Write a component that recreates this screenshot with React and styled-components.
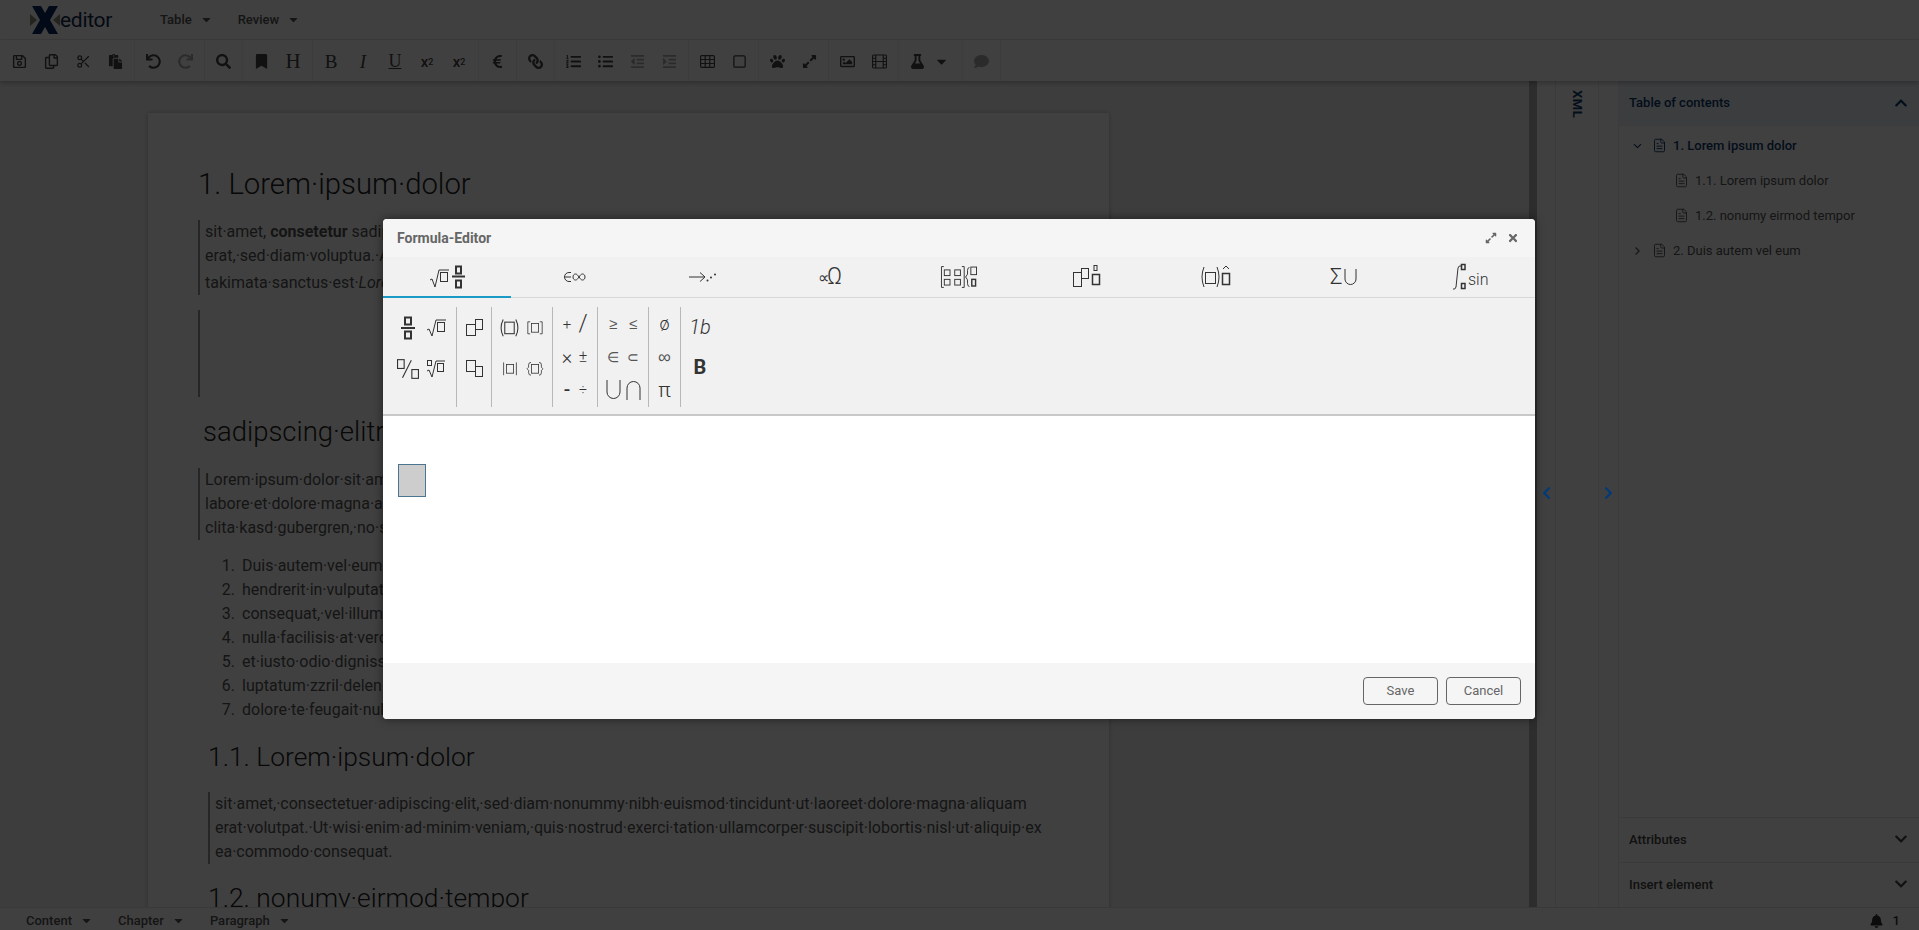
import React from "react";
import styled, { createGlobalStyle } from "styled-components";
import {
  FaRegSave, FaRegCopy, FaPaste, FaUndo, FaRedo, FaSearch, FaBookmark,
  FaEuroSign, FaLink, FaListOl, FaListUl, FaOutdent, FaIndent,
  FaPaw, FaExpandAlt, FaRegImage, FaFlask, FaComment, FaCaretDown,
  FaChevronUp, FaChevronDown, FaChevronLeft, FaChevronRight, FaBell, FaTimes,
} from "react-icons/fa";
import { LuChevronDown, LuChevronRight, LuFileText, LuScissors, LuSquare } from "react-icons/lu";

// global
// ------

const GlobalStyle = createGlobalStyle`
  html, body { margin: 0; padding: 0; height: 100%; overflow: hidden; }
  body { font-family: Roboto, "Liberation Sans", sans-serif; color: #222; }
  * { box-sizing: border-box; }
`;

// page shell
// ----------

const Page = styled.div`
  position: relative;
  width: 1919px;
  height: 930px;
  display: flex;
  flex-direction: column;
  overflow: hidden;
  background: #fff;
`;

const Overlay = styled.div`
  position: absolute;
  inset: 0;
  z-index: 10;
  background: rgba(0, 0, 0, 0.75);
  display: flex;
  justify-content: center;
  align-items: flex-start;
  padding: 219px 1px 0 0;
`;

// header
// ------

const Header = styled.header`
  height: 40px;
  flex: none;
  display: flex;
  align-items: center;
  padding-left: 30px;
  background: #fff;
  border-bottom: 1px solid #eee;
`;

const Logo = styled.div`
  width: 130px;
  display: flex;
  align-items: center;
  font-size: 21px;
  letter-spacing: -0.3px;
  color: #0c2b52;
`;

const LogoMark = styled.svg`
  width: 30px;
  height: 28px;
  flex: none;
`;

const MenuItem = styled.div`
  display: flex;
  align-items: center;
  gap: 8px;
  margin-right: 25px;
  font-size: 13px;
  font-weight: 500;
  color: #555;
  svg { width: 13px; height: 13px; color: #555; }
`;

// toolbar
// -------

const Toolbar = styled.div`
  height: 41px;
  flex: none;
  display: flex;
  padding-left: 3px;
  background: #fff;
  box-shadow: 0 2px 5px rgba(0, 0, 0, 0.25);
  position: relative;
  z-index: 2;
`;

const ToolGroup = styled.div`
  display: flex;
  align-items: center;
  padding-right: 3px;
  margin-right: 2px;
  border-right: 1px solid #eee;
`;

const ToolButton = styled.div`
  width: ${(p) => p.$w || 32}px;
  height: 100%;
  display: flex;
  align-items: center;
  justify-content: center;
  padding: 2px ${(p) => p.$padRight || 0}px 0 0;
  color: ${(p) => (p.$off ? "#aaa" : "#444")};
  font-family: ${(p) => (p.$serif ? '"Liberation Serif", serif' : "Roboto, sans-serif")};
  font-style: ${(p) => (p.$italic ? "italic" : "normal")};
  font-weight: ${(p) => (p.$serif ? 400 : 500)};
  text-decoration: ${(p) => (p.$underline ? "underline" : "none")};
  font-size: ${(p) => p.$size || 14}px;
  svg {
    width: 15px;
    height: 15px;
    transform: ${(p) => (p.$flip ? "scaleX(-1)" : "none")};
  }
  sub, sup { font-size: 9px; }
`;

const ToolSvg = styled.svg`
  fill: none;
  stroke: currentColor;
  stroke-width: 1.2;
`;

// main area
// ---------

const Main = styled.main`
  flex: 1;
  min-height: 0;
  display: flex;
`;

const DocArea = styled.div`
  width: 1529px;
  flex: none;
  overflow: hidden;
  padding-left: 148px;
  background: #f3f3f3;
`;

const Paper = styled.article`
  width: 961px;
  min-height: 900px;
  margin-top: 32px;
  padding: 1px 40px 0 50px;
  background: #fff;
  box-shadow: 0 0 4px rgba(0, 0, 0, 0.25);
`;

const Title = styled.h1`
  margin: ${(p) => p.$top}px 0 0 ${(p) => p.$indent || 0}px;
  font-size: ${(p) => p.$size || 29.3}px;
  line-height: 36px;
  font-weight: 300;
  white-space: nowrap;
  color: #222;
`;

const Block = styled.div`
  margin: ${(p) => p.$top}px 0 0 ${(p) => p.$indent || 0}px;
  min-height: ${(p) => p.$height || 0}px;
  padding-left: 5px;
  border-left: 2px solid #999;
  font-size: 16px;
  font-weight: 400;
  line-height: 24px;
  white-space: nowrap;
  overflow: hidden;
  color: #555;
`;

const Line = styled.span`
  display: block;
  margin-top: ${(p) => p.$gap || 0}px;
`;

const OrderedList = styled.ol`
  margin: 14px 0 0 0;
  padding-left: 41px;
  font-size: 16px;
  font-weight: 400;
  line-height: 24px;
  white-space: nowrap;
  color: #555;
  li { padding-left: 3px; }
`;

const ScrollTrack = styled.div`
  width: 8px;
  flex: none;
  background: #b4b4b4;
`;

const Rail = styled.div`
  width: ${(p) => p.$w}px;
  flex: none;
  display: flex;
  justify-content: center;
  padding-top: 405px;
  background: #fff;
  border-right: 1px solid #ececec;
`;

const RailArrow = styled.div`
  position: relative;
  z-index: 11;
  height: 14px;
  color: #003a7a;
  svg { display: block; width: 13px; height: 14px; }
`;

const XmlRail = styled.div`
  width: 43px;
  flex: none;
  display: flex;
  justify-content: center;
  padding: 9px 0 0 0;
  background: #fff;
  border-right: 1px solid #ececec;
`;

const XmlLabel = styled.div`
  writing-mode: vertical-rl;
  font-size: 13px;
  font-weight: 700;
  letter-spacing: 0.5px;
  color: #0c3a6b;
`;

// right panel
// -----------

const SidePanel = styled.aside`
  width: 300px;
  flex: none;
  display: flex;
  flex-direction: column;
  background: #fff;
`;

const PanelHead = styled.div`
  height: ${(p) => p.$h || 45}px;
  flex: none;
  display: flex;
  align-items: center;
  justify-content: space-between;
  padding: 0 11px 2px 10px;
  font-size: 13px;
  font-weight: 500;
  color: ${(p) => (p.$active ? "#0c3a6b" : "#444")};
  background: ${(p) => (p.$active ? "#eef3f8" : "#fff")};
  border-top: ${(p) => (p.$ruled ? "1px solid #e6e6e6" : "none")};
  svg { width: 14px; height: 14px; }
`;

const TocBody = styled.div`
  flex: 1;
  padding-top: 2px;
`;

const TocRow = styled.div`
  height: 35px;
  display: flex;
  align-items: center;
  padding-left: ${(p) => (p.$child ? 55 : 12)}px;
  font-size: 13px;
  font-weight: ${(p) => (p.$current ? 500 : 400)};
  color: ${(p) => (p.$current ? "#0c3a6b" : "#555")};
`;

const TocTwist = styled.span`
  width: 14px;
  height: 14px;
  margin-right: 7px;
  svg { display: block; width: 13px; height: 14px; }
`;

const TocDoc = styled(LuFileText)`
  width: 15px;
  height: 15px;
  margin-right: 6px;
  stroke-width: 1.5;
  flex: none;
`;

// status bar
// ----------

const StatusBar = styled.footer`
  height: 23px;
  flex: none;
  display: flex;
  align-items: center;
  padding: 3px 0 0 26px;
  background: #fff;
  border-top: 1px solid #e2e2e2;
`;

const Bell = styled.div`
  margin-left: auto;
  margin-right: 19px;
  display: flex;
  align-items: center;
  gap: 10px;
  font-size: 13px;
  font-weight: 500;
  color: #333;
  svg { width: 13px; height: 14px; }
`;

// dialog
// ------

const Dialog = styled.section`
  width: 1152px;
  height: 500px;
  display: flex;
  flex-direction: column;
  border-radius: 4px;
  overflow: hidden;
  background: #fff;
  box-shadow: 0 0 10px rgba(0, 0, 0, 0.5);
`;

const DialogHead = styled.div`
  height: 38px;
  flex: none;
  display: flex;
  align-items: center;
  padding: 0 16px 0 14px;
  font-size: 14px;
  font-weight: 700;
  color: #666;
  background: #f5f5f5;
`;

const HeadIcons = styled.div`
  margin-left: auto;
  display: flex;
  gap: 10px;
  color: #666;
  svg { display: block; width: 12px; height: 12px; }
`;

const TabBar = styled.div`
  height: 41px;
  flex: none;
  display: grid;
  grid-template-columns: repeat(9, 128px);
  background: #f1f1f1;
  border-bottom: 1px solid #d8d8d8;
`;

const Tab = styled.div`
  display: flex;
  align-items: center;
  justify-content: center;
  margin-bottom: -1px;
  color: #444;
  border-bottom: 2px solid ${(p) => (p.$active ? "#1a9ac6" : "transparent")};
`;

const Ribbon = styled.div`
  height: 118px;
  flex: none;
  display: flex;
  padding-top: 9px;
  background: #f1f1f1;
  border-bottom: 2px solid #c8c8c8;
`;

const RibbonGroup = styled.div`
  width: ${(p) => p.$w}px;
  height: 100px;
  flex: none;
  display: grid;
  grid-template-columns: repeat(${(p) => p.$cols}, ${(p) => p.$colW}px);
  grid-auto-rows: ${(p) => p.$rowH}px;
  justify-content: center;
  padding-left: ${(p) => p.$shift || 0}px;
  border-right: ${(p) => (p.$last ? "none" : "1px solid #b8b8b8")};
`;

const Cell = styled.div`
  display: flex;
  align-items: center;
  justify-content: center;
  font-size: ${(p) => p.$size || 17}px;
  font-weight: ${(p) => p.$weight || 300};
  font-style: ${(p) => (p.$italic ? "italic" : "normal")};
  font-family: ${(p) => (p.$math ? '"DejaVu Sans", sans-serif' : "Roboto, sans-serif")};
  color: ${(p) => (p.$math ? "#555" : "#333")};
`;

const MathSvg = styled.svg`
  display: block;
  fill: none;
  stroke: #333;
  stroke-width: 1;
  overflow: visible;
  text {
    fill: #333;
    stroke: none;
    font-family: Roboto, sans-serif;
    font-weight: 300;
  }
  circle { fill: #333; stroke: none; }
`;

const Canvas = styled.div`
  flex: 1;
  padding: 48px 0 0 15px;
  background: #fff;
`;

const Slot = styled.div`
  width: 28px;
  height: 33px;
  background: #cdcdcd;
  border: 1px solid #4c7390;
`;

const DialogFoot = styled.div`
  height: 56px;
  flex: none;
  display: flex;
  justify-content: flex-end;
  gap: 8px;
  padding: 14px 14px 0 0;
  background: #f5f5f5;
`;

const DialogButton = styled.div`
  width: 75px;
  height: 28px;
  display: flex;
  align-items: center;
  justify-content: center;
  padding-bottom: 1px;
  font-size: 13px;
  color: #666;
  border: 1px solid #666;
  border-radius: 4px;
`;

// toolbar drawings
// ----------------

const TableGrid = () => (
  <ToolSvg viewBox="0 0 15 15">
    <rect x="0.6" y="1.6" width="13.8" height="11.8" rx="1" />
    <path d="M.6 5.5h13.8M.6 9.5h13.8M5.2 1.6v11.8M9.8 1.6v11.8" />
  </ToolSvg>
);

const FilmStrip = () => (
  <ToolSvg viewBox="0 0 16 15">
    <rect x="0.6" y="0.6" width="14.8" height="13.8" rx="1" />
    <path d="M4 .6v13.8M12 .6v13.8M4 7.5h8M.6 4h3.4M.6 7.5h3.4M.6 11h3.4M12 4h3.4M12 7.5h3.4M12 11h3.4" />
  </ToolSvg>
);

// math drawings
// -------------

const Frac = () => (
  <MathSvg width="14" height="24" viewBox="0 0 14 24">
    <rect x="4" y="1.5" width="6" height="7" strokeWidth="2" />
    <path d="M0 12h14" strokeWidth="2" />
    <rect x="4" y="15.5" width="6" height="7" strokeWidth="2" />
  </MathSvg>
);

const Sqrt = () => (
  <MathSvg width="20" height="18" viewBox="0 0 20 18">
    <path d="M1 11l2-1 3 7 4-16h10" />
    <rect x="11.5" y="3.5" width="7" height="9" />
  </MathSvg>
);

const NthRoot = () => (
  <MathSvg width="19" height="18" viewBox="0 0 19 18">
    <rect x="1.5" y="0.5" width="4" height="5" />
    <path d="M1 11l2-1 3 7 4-16h9" />
    <rect x="11.5" y="3.5" width="6" height="8" />
  </MathSvg>
);

const SlashFrac = () => (
  <MathSvg width="22" height="20" viewBox="0 0 20 18">
    <rect x="0.5" y="0.5" width="6" height="8" />
    <path d="M5 17L13 1" />
    <rect x="13.5" y="9.5" width="6" height="8" />
  </MathSvg>
);

const SupBox = () => (
  <MathSvg width="17" height="17" viewBox="0 0 17 17">
    <rect x="0.5" y="5.5" width="9" height="11" />
    <rect x="9.5" y="0.5" width="7" height="10" />
  </MathSvg>
);

const SubBox = () => (
  <MathSvg width="17" height="17" viewBox="0 0 17 17">
    <rect x="0.5" y="0.5" width="9" height="11" />
    <rect x="9.5" y="6.5" width="7" height="10" />
  </MathSvg>
);

const Fence = ({ kind, big }) => {
  const paths = {
    paren: "M4 0Q0 8 4 16M16 0Q20 8 16 16",
    square: "M4 .5H1v15h3M16 .5h3v15h-3",
    abs: "M2 0v16M18 0v16",
    brace: "M5 0Q2 0 2 3v3L0 8l2 2v3q0 3 3 3M15 0q3 0 3 3v3l2 2-2 2v3q0 3-3 3",
  };
  const size = big ? 21 : 16;
  return (
    <MathSvg width={size} height={size * 0.85} viewBox="0 0 20 16">
      <path d={paths[kind]} />
      <rect x="5.5" y="2.5" width="9" height="11" />
    </MathSvg>
  );
};

const CupCap = ({ flip }) => (
  <MathSvg width="15" height="20" viewBox="0 0 15 20">
    <path d={flip ? "M1 20V8a6.5 6.5 0 0 1 13 0v12" : "M1 0v12a6.5 6.5 0 0 0 13 0V0"} />
  </MathSvg>
);

const TabRadical = () => (
  <MathSvg width="36" height="24" viewBox="0 0 36 24">
    <path d="M1 15l2-1 3 8 4-17h10" />
    <rect x="11.5" y="7.5" width="7" height="9" />
    <rect x="27" y="1.5" width="5" height="7" strokeWidth="2" />
    <path d="M23 11.5h13" strokeWidth="2" />
    <rect x="27" y="15.5" width="5" height="7" strokeWidth="2" />
  </MathSvg>
);

const TabElement = () => (
  <MathSvg width="24" height="16" viewBox="0 0 24 16">
    <path d="M8 3.5H6a4.5 4.5 0 0 0 0 9h2M1.5 8H8" />
    <path d="M16 8c-1.5-2-2-3-3.5-3s-2.5 1.3-2.5 3 1 3 2.5 3 2-1 3.5-3c1.5-2 2-3 3.5-3S22 6.300 22 8s-1 3-2.500 3-2-1-3.500-3z" />
  </MathSvg>
);

const TabArrows = () => (
  <MathSvg width="28" height="14" viewBox="0 0 28 14">
    <path d="M0 7h15M11 2.500 16 7l-5 4.500" />
    <circle cx="18.500" cy="10.500" r="1" />
    <circle cx="22" cy="7.500" r="1" />
    <circle cx="26" cy="4.500" r="1" />
  </MathSvg>
);

const TabGreek = () => (
  <MathSvg width="27" height="20" viewBox="0 0 27 20">
    <text x="0" y="16" fontSize="16">∝</text>
    <text x="9" y="17" fontSize="23">Ω</text>
  </MathSvg>
);

const TabMatrix = () => (
  <MathSvg width="36" height="24" viewBox="0 0 38 24">
    <path d="M3 1H0.5v22H3M22 1h2.5v22H22" />
    <rect x="3.5" y="4.5" width="6" height="6" />
    <rect x="14.5" y="4.5" width="6" height="6" />
    <rect x="3.5" y="14.5" width="6" height="6" />
    <rect x="14.5" y="14.5" width="6" height="6" />
    <path d="M30 2q-2 0-2 3v4l-2 3 2 3v4q0 3 2 3" />
    <rect x="31.5" y="1.5" width="6" height="8" />
    <rect x="32.5" y="14.5" width="4" height="7" strokeWidth="1.5" />
  </MathSvg>
);

const TabScripts = () => (
  <MathSvg width="28" height="24" viewBox="0 0 28 24">
    <rect x="0.5" y="7.5" width="8" height="14" />
    <rect x="8.5" y="3.5" width="7" height="10" />
    <rect x="21" y="0.5" width="3" height="5" />
    <rect x="19.5" y="9.5" width="7" height="10" strokeWidth="1.5" />
  </MathSvg>
);

const TabAccents = () => (
  <MathSvg width="30" height="24" viewBox="0 0 30 24">
    <path d="M4 2Q0 12 4 22M17 2q4 10 0 20" />
    <rect x="5.5" y="7.5" width="10" height="11" />
    <path d="M23 4l3-3 3 3" />
    <rect x="22.5" y="8.5" width="7" height="11" strokeWidth="1.5" />
  </MathSvg>
);

const TabSum = () => (
  <MathSvg width="27" height="20" viewBox="0 0 27 20">
    <text x="0" y="17" fontSize="22">Σ</text>
    <path d="M15 2v10a5.500 5.500 0 0 0 11 0V2" />
  </MathSvg>
);

const TabIntegral = () => (
  <MathSvg width="38" height="26" viewBox="0 0 38 26">
    <path d="M1 25q2 1 3-2l2-19q1-3 3-2" />
    <rect x="9.5" y="0.5" width="3.500" height="5" strokeWidth="1.5" />
    <rect x="9.5" y="19.5" width="3.500" height="5" strokeWidth="1.5" />
    <text x="16" y="21" fontSize="16">sin</text>
  </MathSvg>
);

// data
// ----

const toolGroups = [
  [<FaRegSave />, <FaRegCopy />, <LuScissors />, <FaPaste />],
  [<FaUndo />, { icon: <FaRedo />, off: true }],
  [<FaSearch />],
  [<FaBookmark />, { text: "H", serif: true, size: 21 }],
  [
    { text: "B", serif: true, size: 19 },
    { text: "I", serif: true, italic: true, size: 19 },
    { text: "U", serif: true, underline: true, size: 18 },
    { text: <>x<sub>2</sub></>, size: 15 },
    { text: <>x<sup>2</sup></>, size: 15 },
  ],
  [<FaEuroSign />],
  [{ icon: <FaLink />, flip: true }],
  [<FaListOl />, <FaListUl />, { icon: <FaOutdent />, off: true }, { icon: <FaIndent />, off: true }],
  [<TableGrid />, <LuSquare />],
  [<FaPaw />, <FaExpandAlt />],
  [<FaRegImage />, <FilmStrip />],
  [<FaFlask />, { icon: <FaCaretDown />, w: 26, padRight: 10 }],
  [{ icon: <FaComment />, off: true }],
];

const tabs = [
  <TabRadical />,
  <TabElement />,
  <TabArrows />,
  <TabGreek />,
  <TabMatrix />,
  <TabScripts />,
  <TabAccents />,
  <TabSum />,
  <TabIntegral />,
];

const listItems = [
  "Duis·autem·vel·eum·iriure·dolor·in",
  "hendrerit·in·vulputate·velit·esse",
  "consequat,·vel·illum·dolore·eu",
  "nulla·facilisis·at·vero·eros·et",
  "et·iusto·odio·dignissim·qui",
  "luptatum·zzril·delenit·augue",
  "dolore·te·feugait·nulla·facilisi.",
];

// rendering
// ---------

const Tool = ({ item }) => {
  if (React.isValidElement(item)) return <ToolButton>{item}</ToolButton>;
  return (
    <ToolButton
      $off={item.off}
      $serif={item.serif}
      $italic={item.italic}
      $underline={item.underline}
      $size={item.size}
      $flip={item.flip}
      $w={item.w}
      $padRight={item.padRight}
    >
      {item.icon || item.text}
    </ToolButton>
  );
};

const App = () => {
  return (
    <Page>
      <GlobalStyle />

      <Header>
        <Logo>
          <LogoMark viewBox="0 0 30 28">
            <path d="M0 8l7 6-7 6zM30 8l-7 6 7 6z" fill="#8c8c80" />
            <path d="M2 0h9l4 7 4-7h9l-8 14 8 14h-9l-4-7-4 7H2l8-14z" fill="#0c2b5e" />
          </LogoMark>
          editor
        </Logo>
        <MenuItem>Table <FaCaretDown /></MenuItem>
        <MenuItem>Review <FaCaretDown /></MenuItem>
      </Header>

      <Toolbar>
        {toolGroups.map((group, index) => (
          <ToolGroup key={index}>
            {group.map((item, i) => (
              <Tool item={item} key={i} />
            ))}
          </ToolGroup>
        ))}
      </Toolbar>

      <Main>
        <DocArea>
          <Paper>
            <Title $top={52}>1. Lorem·ipsum·dolor</Title>
            <Block $top={18} $height={75}>
              <Line>sit·amet, <b>consetetur</b> sadipscing·elitr,·sed·diam·nonumy·eirmod·tempor·invidunt·ut·labore·et·dolore·magna·aliquyam</Line>
              <Line>erat,·sed·diam·voluptua.·At·vero·eos·et·accusam·et·justo·duo·dolores·et·ea·rebum.·Stet·clita·kasd·gubergren,·no·sea</Line>
              <Line $gap={3}>takimata·sanctus·est·<i>Lorem</i>·ipsum·dolor·sit·amet.</Line>
            </Block>
            <Block $top={15} $height={87} />
            <Title $top={17} $size={27.5} $indent={5}>sadipscing·elitr</Title>
            <Block $top={18}>
              <Line>Lorem·ipsum·dolor·sit·amet,·consetetur·sadipscing·elitr,·sed·diam·nonumy·eirmod·tempor·invidunt·ut</Line>
              <Line>labore·et·dolore·magna·aliquyam·erat,·sed·diam·voluptua.·At·vero·eos·et·accusam·et·justo·duo·dolores</Line>
              <Line>clita·kasd·gubergren,·no·sea·takimata·sanctus·est·Lorem·ipsum·dolor·sit·amet.</Line>
            </Block>
            <OrderedList>
              {listItems.map((item) => (
                <li key={item}>{item}</li>
              ))}
            </OrderedList>
            <Title $top={17} $size={26.4} $indent={10}>1.1. Lorem·ipsum·dolor</Title>
            <Block $top={17} $indent={10}>
              <Line>sit·amet,·consectetuer·adipiscing·elit,·sed·diam·nonummy·nibh·euismod·tincidunt·ut·laoreet·dolore·magna·aliquam</Line>
              <Line>erat·volutpat.·Ut·wisi·enim·ad·minim·veniam,·quis·nostrud·exerci·tation·ullamcorper·suscipit·lobortis·nisl·ut·aliquip·ex</Line>
              <Line>ea·commodo·consequat.</Line>
            </Block>
            <Title $top={16} $size={26.4} $indent={10}>1.2. nonumy·eirmod·tempor</Title>
          </Paper>
        </DocArea>
        <ScrollTrack />
        <Rail $w={19}>
          <RailArrow><FaChevronLeft /></RailArrow>
        </Rail>
        <XmlRail>
          <XmlLabel>XML</XmlLabel>
        </XmlRail>
        <Rail $w={20}>
          <RailArrow><FaChevronRight /></RailArrow>
        </Rail>
        <SidePanel>
          <PanelHead $active>
            Table of contents <FaChevronUp />
          </PanelHead>
          <TocBody>
            <TocRow $current>
              <TocTwist><LuChevronDown /></TocTwist>
              <TocDoc /> 1. Lorem ipsum dolor
            </TocRow>
            <TocRow $child>
              <TocDoc /> 1.1. Lorem ipsum dolor
            </TocRow>
            <TocRow $child>
              <TocDoc /> 1.2. nonumy eirmod tempor
            </TocRow>
            <TocRow>
              <TocTwist><LuChevronRight /></TocTwist>
              <TocDoc /> 2. Duis autem vel eum
            </TocRow>
          </TocBody>
          <PanelHead $ruled>
            Attributes <FaChevronDown />
          </PanelHead>
          <PanelHead $ruled>
            Insert element <FaChevronDown />
          </PanelHead>
        </SidePanel>
      </Main>

      <StatusBar>
        <MenuItem>Content <FaCaretDown /></MenuItem>
        <MenuItem>Chapter <FaCaretDown /></MenuItem>
        <MenuItem>Paragraph <FaCaretDown /></MenuItem>
        <Bell><FaBell /> 1</Bell>
      </StatusBar>

      <Overlay>
        <Dialog>
          <DialogHead>
            Formula-Editor
            <HeadIcons>
              <FaExpandAlt />
              <FaTimes />
            </HeadIcons>
          </DialogHead>
          <TabBar>
            {tabs.map((tab, index) => (
              <Tab $active={index === 0} key={index}>{tab}</Tab>
            ))}
          </TabBar>
          <Ribbon>
            <RibbonGroup $w={74} $shift={4} $cols={2} $colW={28} $rowH={41}>
              <Cell><Frac /></Cell>
              <Cell><Sqrt /></Cell>
              <Cell><SlashFrac /></Cell>
              <Cell><NthRoot /></Cell>
            </RibbonGroup>
            <RibbonGroup $w={35} $cols={1} $colW={34} $rowH={41}>
              <Cell><SupBox /></Cell>
              <Cell><SubBox /></Cell>
            </RibbonGroup>
            <RibbonGroup $w={61} $cols={2} $colW={25} $rowH={41}>
              <Cell><Fence kind="paren" big /></Cell>
              <Cell><Fence kind="square" /></Cell>
              <Cell><Fence kind="abs" /></Cell>
              <Cell><Fence kind="brace" /></Cell>
            </RibbonGroup>
            <RibbonGroup $w={45} $cols={2} $colW={16} $rowH={33}>
              <Cell $size={15}>+</Cell>
              <Cell $size={23}>/</Cell>
              <Cell $size={20}>×</Cell>
              <Cell $size={16}>±</Cell>
              <Cell $size={19} $weight={500}>-</Cell>
              <Cell $size={14}>÷</Cell>
            </RibbonGroup>
            <RibbonGroup $w={51} $cols={2} $colW={20} $rowH={33}>
              <Cell $size={15} $math>≥</Cell>
              <Cell $size={15} $math>≤</Cell>
              <Cell $size={14} $math>∈</Cell>
              <Cell $size={14} $math>⊂</Cell>
              <Cell><CupCap /></Cell>
              <Cell><CupCap flip /></Cell>
            </RibbonGroup>
            <RibbonGroup $w={32} $cols={1} $colW={30} $rowH={33}>
              <Cell $size={18}>ø</Cell>
              <Cell $size={18} $math>∞</Cell>
              <Cell $size={21}>π</Cell>
            </RibbonGroup>
            <RibbonGroup $w={38} $cols={1} $colW={38} $rowH={40} $last>
              <Cell $size={20} $italic>1b</Cell>
              <Cell $size={20} $weight={700}>B</Cell>
            </RibbonGroup>
          </Ribbon>
          <Canvas>
            <Slot />
          </Canvas>
          <DialogFoot>
            <DialogButton>Save</DialogButton>
            <DialogButton>Cancel</DialogButton>
          </DialogFoot>
        </Dialog>
      </Overlay>
    </Page>
  );
};

export default App;
